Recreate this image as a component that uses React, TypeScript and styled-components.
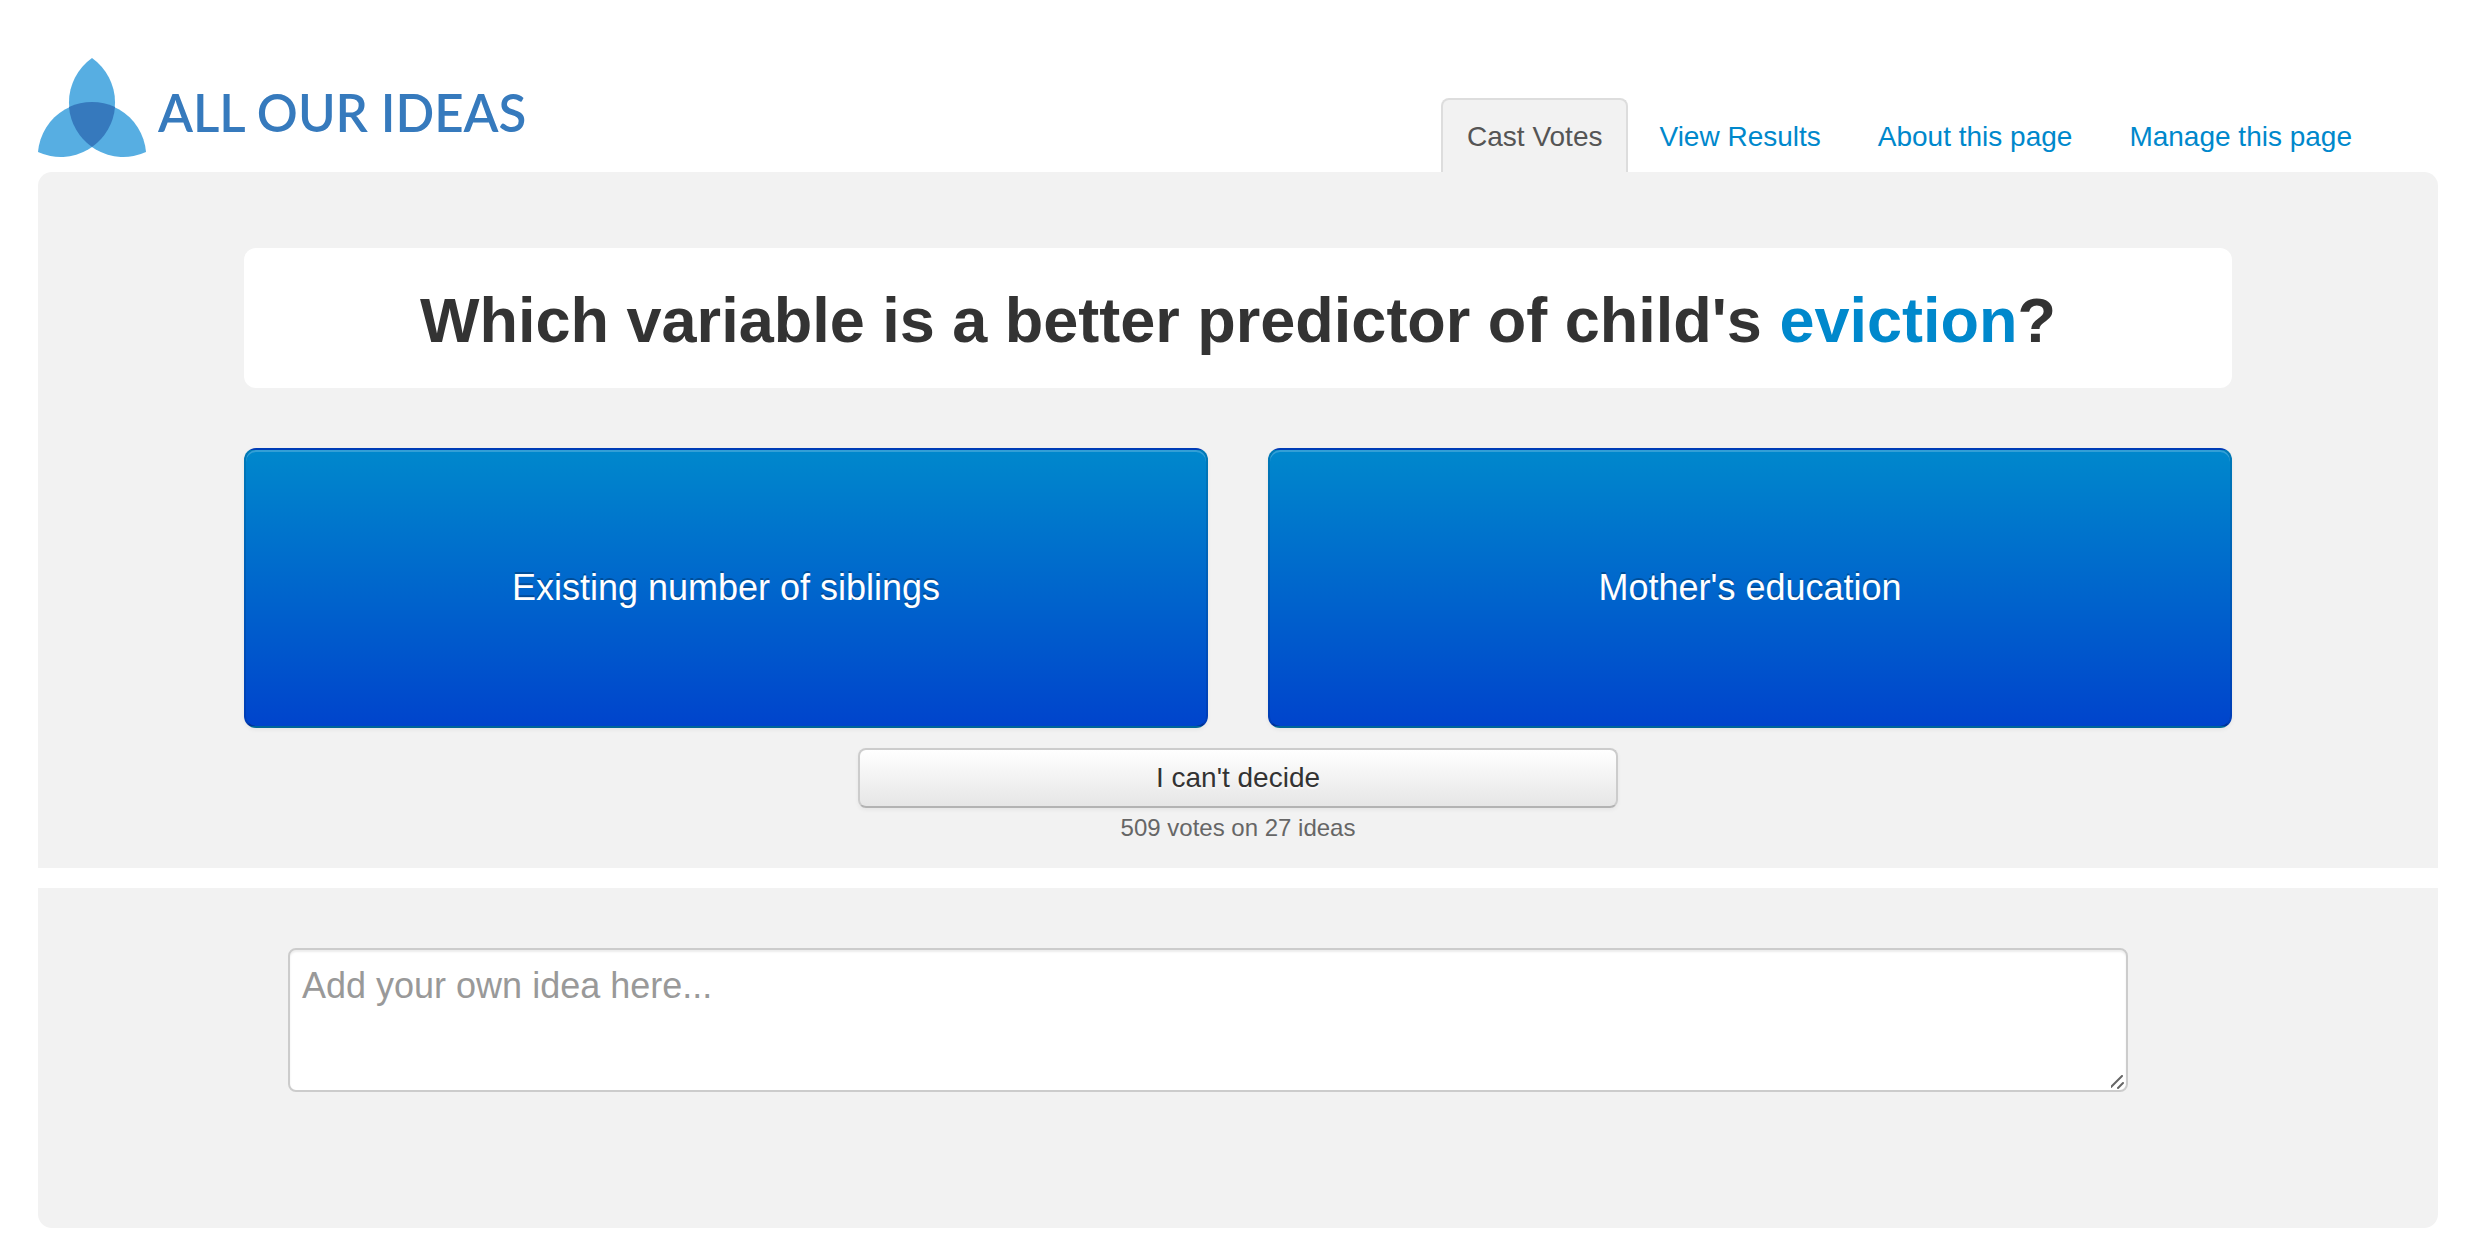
import React, { useState } from "react";
import styled, { createGlobalStyle, css } from "styled-components";

const GlobalStyle = createGlobalStyle`
  *, *::before, *::after { box-sizing: border-box; }
  body {
    margin: 0;
    background: #fff;
    color: #333;
    font: 28px/40px "Helvetica Neue", "Liberation Sans", Arial, sans-serif;
  }
`;

const Page = styled.div`
  padding: 58px 52px 26px 38px;
`;

const Header = styled.header`
  display: flex;
  justify-content: space-between;
  align-items: flex-start;
  height: 114px;
`;

const Logo = styled.a`
  display: flex;
  align-items: center;
  gap: 12px;
  color: #367abd;
  text-decoration: none;
  white-space: nowrap;
`;

const LogoName = styled.span`
  padding-top: 10px;
  font: 600 51px/60px Lato, sans-serif;
`;

const Tabs = styled.nav`
  display: flex;
  align-self: flex-end;
  gap: 5px;
  margin-right: 60px;
`;

const Tab = styled.a<{ $active?: boolean }>`
  padding: 17px 24px 15px;
  border: 2px solid transparent;
  border-bottom: 0;
  border-radius: 8px 8px 0 0;
  color: #0088cc;
  text-decoration: none;
  white-space: nowrap;
  ${(p) =>
    p.$active &&
    css`
      color: #555;
      background: #f2f2f2;
      border-color: #ddd;
    `}
`;

const Panel = styled.section<{ $place: "top" | "bottom" }>`
  background: #f2f2f2;
  border-radius: ${(p) => (p.$place === "top" ? "14px 14px 0 0" : "0 0 14px 14px")};
  padding: ${(p) => (p.$place === "top" ? "76px 206px 20px" : "60px 310px 136px 250px")};
  margin-bottom: ${(p) => (p.$place === "top" ? "20px" : "0")};
`;

const Question = styled.h1`
  margin: 0 0 60px;
  padding: 36px 20px 32px;
  border-radius: 12px;
  background: #fff;
  text-align: center;
  font-size: 63px;
  line-height: 72px;
  font-weight: bold;
`;

const Topic = styled.span`
  color: #0088cc;
`;

const Choices = styled.div`
  display: grid;
  grid-template-columns: 1fr 1fr;
  gap: 60px;
  margin-bottom: 20px;
`;

const Choice = styled.button`
  min-height: 280px;
  padding: 20px;
  border: 2px solid;
  border-color: rgba(0, 0, 0, 0.1) rgba(0, 0, 0, 0.1) rgba(0, 0, 0, 0.25);
  border-radius: 12px;
  background: #0044cc linear-gradient(to bottom, #0088cc, #0044cc);
  box-shadow: inset 0 2px 0 rgba(255, 255, 255, 0.2), 0 2px 4px rgba(0, 0, 0, 0.05);
  color: #fff;
  text-shadow: 0 -2px 0 rgba(0, 0, 0, 0.25);
  font: inherit;
  font-size: 36px;
  cursor: pointer;
`;

const Decide = styled.div`
  display: flex;
  flex-direction: column;
  align-items: center;
`;

const SkipButton = styled.button`
  width: 760px;
  max-width: 100%;
  height: 60px;
  border: 2px solid #ccc;
  border-bottom-color: #b3b3b3;
  border-radius: 8px;
  background: linear-gradient(to bottom, #fff, #e6e6e6);
  box-shadow: inset 0 2px 0 rgba(255, 255, 255, 0.2), 0 2px 4px rgba(0, 0, 0, 0.05);
  color: #333;
  text-shadow: 0 2px 2px rgba(255, 255, 255, 0.75);
  font: inherit;
  cursor: pointer;
`;

const Tally = styled.p`
  margin: 0;
  color: #666;
  font-size: 24px;
`;

const IdeaBox = styled.textarea`
  display: block;
  width: 100%;
  height: 144px;
  padding: 16px 12px;
  border: 2px solid #ccc;
  border-radius: 8px;
  background: #fff;
  box-shadow: inset 0 2px 2px rgba(0, 0, 0, 0.075);
  color: #555;
  font: inherit;
  font-size: 36px;
  resize: both;
  &::placeholder { color: #999; opacity: 1; }
  &::-webkit-resizer {
    background: url("data:image/svg+xml,%3Csvg xmlns='http://www.w3.org/2000/svg' viewBox='0 0 15 15'%3E%3Cpath d='M0 12 11 1M7 13l5-5' stroke='%23666' stroke-width='2' stroke-linecap='round'/%3E%3C/svg%3E") no-repeat center;
  }
`;

/* Three overlapping circles of one radius; each leaf is where two of them meet. */
const LogoMark = () => (
  <svg width="108" height="100" viewBox="0 0 108 100" aria-hidden="true">
    <g fill="#57aee2">
      <path d="M54 0A54.5 54.5 0 0 0 54 89A54.5 54.5 0 0 0 54 0Z" />
      <path d="M0 94A54.5 54.5 0 0 1 77 49A54.5 54.5 0 0 1 0 94Z" />
      <path d="M108 94A54.5 54.5 0 0 0 31 49A54.5 54.5 0 0 0 108 94Z" />
    </g>
    <path
      d="M31 49A54.5 54.5 0 0 1 77 49A54.5 54.5 0 0 1 54 89A54.5 54.5 0 0 1 31 49Z"
      fill="#3679bd"
    />
  </svg>
);

const tabs = ["Cast Votes", "View Results", "About this page", "Manage this page"];
const choices = ["Existing number of siblings", "Mother's education"];

export default function App() {
  const [active, setActive] = useState(tabs[0]);
  return (
    <>
      <GlobalStyle />
      <Page>
        <Header>
          <Logo href="#">
            <LogoMark />
            <LogoName>ALL OUR IDEAS</LogoName>
          </Logo>
          <Tabs>
            {tabs.map((tab) => (
              <Tab key={tab} href="#" $active={tab === active} onClick={() => setActive(tab)}>
                {tab}
              </Tab>
            ))}
          </Tabs>
        </Header>
        <main>
          <Panel $place="top">
            <Question>
              Which variable is a better predictor of child's <Topic>eviction</Topic>?
            </Question>
            <Choices>
              {choices.map((choice) => (
                <Choice key={choice} type="button">{choice}</Choice>
              ))}
            </Choices>
            <Decide>
              <SkipButton type="button">I can't decide</SkipButton>
              <Tally>509 votes on 27 ideas</Tally>
            </Decide>
          </Panel>
          <Panel $place="bottom">
            <IdeaBox aria-label="Add your own idea" placeholder="Add your own idea here..." />
          </Panel>
        </main>
      </Page>
    </>
  );
}
